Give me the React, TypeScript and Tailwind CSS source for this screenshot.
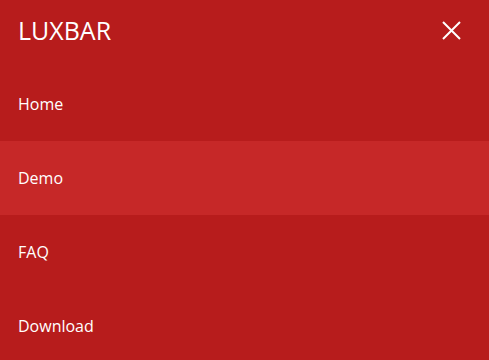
export default function App() {
  const items = ['Home', 'Demo', 'FAQ', 'Download'];

  return (
    <div className="w-full h-[360px] overflow-hidden bg-[#b71c1c] text-white" style={{ fontFamily: '"Open Sans", sans-serif' }}>
      {/* Brand */}
      <div className="h-[67px] flex items-center justify-between pl-[18px] pr-[28px] pb-[7px]">
        <span className="text-[25px] leading-none">LUXBAR</span>
        <svg width="19" height="19" viewBox="0 0 19 19" className="block">
          <path d="M1 1L18 18M18 1L1 18" stroke="white" strokeWidth="2" />
        </svg>
      </div>

      {/* Menu */}
      <ul>
        {items.map((item) => (
          <li
            key={item}
            className={
              'h-[74px] flex items-center pl-[18px] text-[16px] ' +
              (item === 'Demo' ? 'bg-[#c62828]' : '')
            }
          >
            {item}
          </li>
        ))}
      </ul>
    </div>
  );
}
